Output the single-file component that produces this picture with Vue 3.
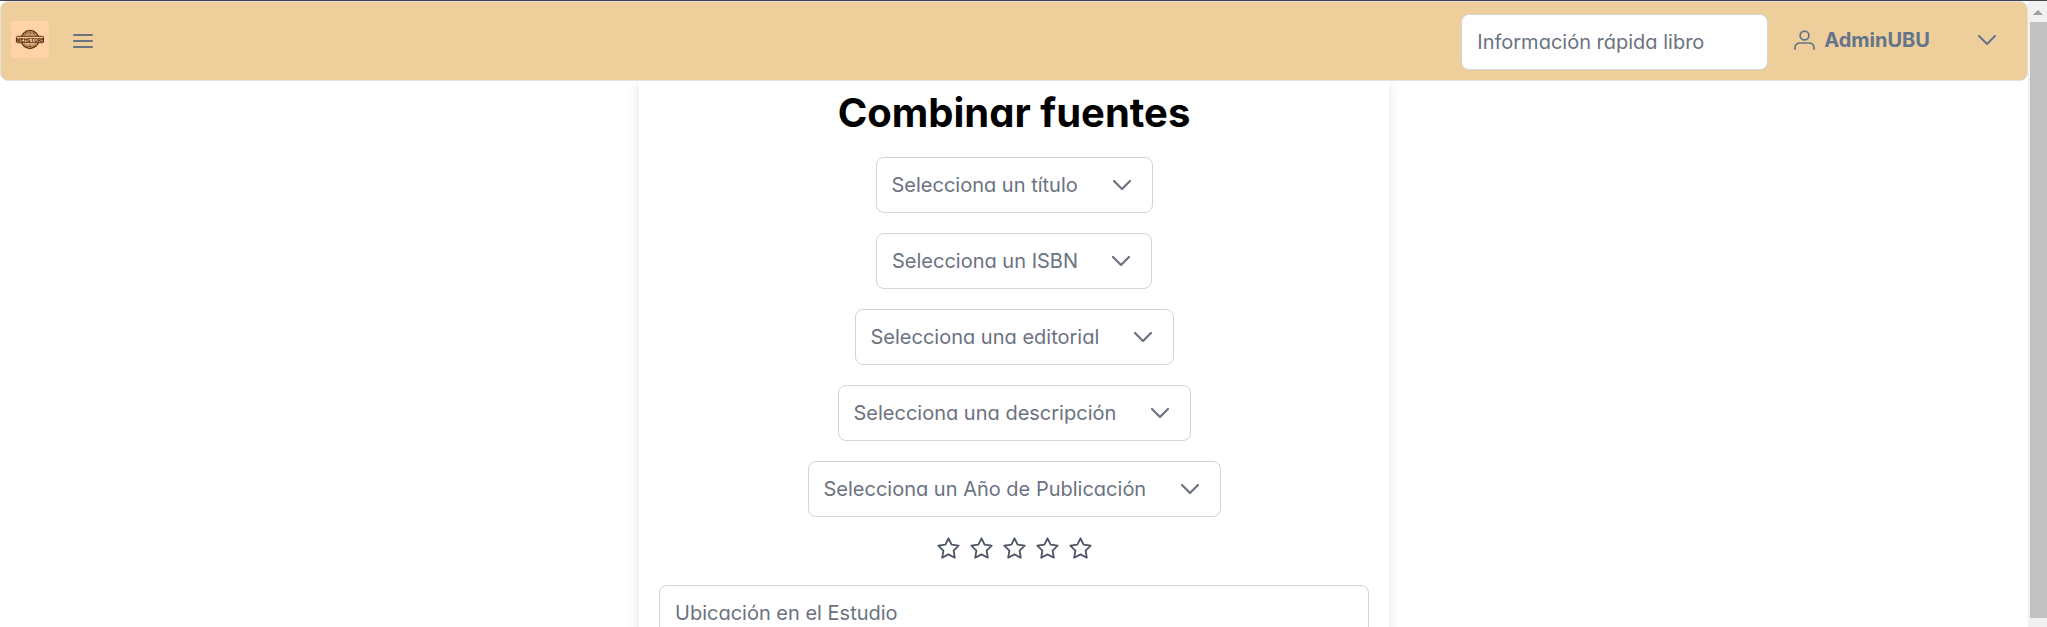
<script setup>
import { ref } from 'vue'

const selects = [
  { id: 'titulo', label: 'Selecciona un título' },
  { id: 'isbn', label: 'Selecciona un ISBN' },
  { id: 'editorial', label: 'Selecciona una editorial' },
  { id: 'descripcion', label: 'Selecciona una descripción' },
  { id: 'publicacion', label: 'Selecciona un Año de Publicación' },
]
const rating = ref(0)
const quickSearch = ref('')
const location = ref('')
</script>

<template>
  <div class="window">
    <div class="page">
      <header class="menubar">
        <a class="logo" href="#" aria-label="Inicio">
          <svg viewBox="0 0 38 37" width="38" height="37">
            <g fill="none" stroke="#5d3212">
              <circle cx="19" cy="18.500" r="9" stroke-width="1.400" />
              <circle cx="19" cy="18.500" r="7.300" stroke-width="0.700" stroke="#9a673c" />
              <path d="M12.500 14h13M14 12.200h10M12.500 24h13M14.500 25.500h9M19 9.500v5M19 23v4.500M15.500 11l-1 3M22.500 11l1 3" stroke-width="0.700" stroke="#80502a" />
            </g>
            <rect x="5.500" y="15.300" width="27" height="6.400" rx="1" fill="#f3c592" stroke="#5d3212" stroke-width="1" />
            <text x="19" y="20.600" text-anchor="middle" class="logo-text">MEHSTORE</text>
          </svg>
        </a>
        <button class="icon-button" type="button" aria-label="Abrir menú">
          <svg viewBox="0 0 20 14" width="20" height="14">
            <path d="M1 1h18M1 7h18M1 13h18" fill="none" stroke="currentColor" stroke-width="2" stroke-linecap="round" />
          </svg>
        </button>
        <input v-model="quickSearch" class="field quick" type="text" placeholder="Información rápida libro" aria-label="Información rápida libro" />
        <button class="user" type="button">
          <svg viewBox="0 0 21 20" width="21" height="20">
            <g fill="none" stroke="currentColor" stroke-width="1.700" stroke-linecap="round">
              <circle cx="10.500" cy="5.500" r="4.400" />
              <path d="M1 19v-1c0-3.300 2.300-5 5.500-5h8c3.200 0 5.500 1.700 5.500 5v1" />
            </g>
          </svg>
          <span>AdminUBU</span>
          <svg class="user-caret" viewBox="0 0 18 10" width="18" height="10">
            <path d="M1 1l8 8 8-8" fill="none" stroke="currentColor" stroke-width="2" stroke-linecap="round" stroke-linejoin="round" />
          </svg>
        </button>
      </header>

      <main class="card">
        <h1>Combinar fuentes</h1>
        <div v-for="item in selects" :key="item.id" class="dropdown">
          <select :id="item.id" :aria-label="item.label">
            <option value="">{{ item.label }}</option>
          </select>
          <svg class="caret" viewBox="0 0 18 10" width="18" height="10">
            <path d="M1 1l8 8 8-8" fill="none" stroke="currentColor" stroke-width="2.200" stroke-linecap="round" stroke-linejoin="round" />
          </svg>
        </div>
        <div class="rating" role="radiogroup" aria-label="Valoración">
          <label v-for="n in 5" :key="n" class="star">
            <input v-model="rating" type="radio" name="rating" :value="n" :aria-label="`${n} estrellas`" />
            <svg viewBox="0 0 23 23" width="23" height="23">
              <path d="M11.500 1.300l3.100 6.400 7.100 1-5.100 4.900 1.200 7.100-6.300-3.300-6.300 3.300 1.200-7.100L1.300 8.700l7.100-1z" fill="none" stroke="currentColor" stroke-width="1.800" stroke-linejoin="round" />
            </svg>
          </label>
        </div>
        <input v-model="location" class="field wide" type="text" placeholder="Ubicación en el Estudio" aria-label="Ubicación en el Estudio" />
      </main>
    </div>

    <div class="scrollbar" aria-hidden="true">
      <svg viewBox="0 0 10 5" width="10" height="5"><path d="M0 5L5 0l5 5z" fill="#a0a0a0" /></svg>
      <div class="thumb"></div>
    </div>
  </div>
</template>

<style>
body {
  background: #fff;
}
</style>

<style scoped>
* {
  box-sizing: border-box;
}
.window {
  display: flex;
  height: 100vh;
  overflow: hidden;
  border-top: 1px solid #45434a;
  font-family: Inter, "Liberation Sans", sans-serif;
  font-size: 20px;
  font-feature-settings: "cv02", "cv03", "cv04", "cv11";
}
.page {
  flex: 1;
  min-width: 0;
}
.menubar {
  position: relative;
  z-index: 1;
  display: flex;
  align-items: center;
  height: 80px;
  padding: 0 31px 0 10px;
  background: #eecf9b;
  border: 1px solid #e1e1e6;
  border-radius: 8px;
}
.logo {
  display: flex;
  margin-bottom: 4px;
  background: #ffd3a5;
}
.logo-text {
  font-size: 5px;
  font-weight: 800;
  fill: #5d3212;
}
button {
  display: flex;
  align-items: center;
  padding: 0;
  border: 0;
  background: none;
  font: inherit;
}
.icon-button {
  margin-left: 24px;
  color: #6b7280;
}
.field {
  height: 56px;
  padding: 0 15px;
  border: 1px solid #d1d5db;
  border-radius: 8px;
  background: #fff;
  color: #4b5563;
  font: inherit;
  font-feature-settings: inherit;
}
.field::placeholder {
  color: #6b7280;
  opacity: 1;
}
.quick {
  width: 307px;
  margin: 2px 26px 0 auto;
}
.user {
  margin-bottom: 2px;
  color: #64748b;
  font-weight: 700;
}
.user span {
  margin-left: 9px;
}
.user-caret {
  margin-left: 48px;
}
.card {
  display: flex;
  flex-direction: column;
  align-items: center;
  width: 750px;
  height: 100vh;
  margin: 0 auto;
  padding: 8px 20px 20px;
  box-shadow: 0 0 12px rgba(0, 0, 0, 0.1);
}
h1 {
  margin: 0 0 20px;
  font-size: 40px;
  font-weight: 700;
  line-height: 48px;
  color: #000;
}
.dropdown {
  position: relative;
  display: flex;
  margin-bottom: 20px;
}
select {
  appearance: none;
  height: 56px;
  padding: 0 73px 0 15px;
  border: 1px solid #d1d5db;
  border-radius: 8px;
  background: #fff;
  color: #6b7280;
  font: inherit;
  font-feature-settings: inherit;
}
.caret {
  position: absolute;
  top: 23px;
  right: 22px;
  color: #6b7280;
  pointer-events: none;
}
.rating {
  display: flex;
  gap: 10px;
  margin-bottom: 25px;
  color: #4b5563;
}
.star {
  position: relative;
  display: flex;
}
.star input {
  position: absolute;
  inset: 0;
  margin: 0;
  opacity: 0;
}
.wide {
  width: 100%;
  flex: none;
}
.scrollbar {
  display: flex;
  flex-direction: column;
  align-items: center;
  gap: 7px;
  width: 19px;
  padding: 9px 0;
  background: #f1f1f1;
}
.thumb {
  flex: 1;
  align-self: stretch;
  margin-left: 2px;
  background: #c1c1c1;
}
</style>
